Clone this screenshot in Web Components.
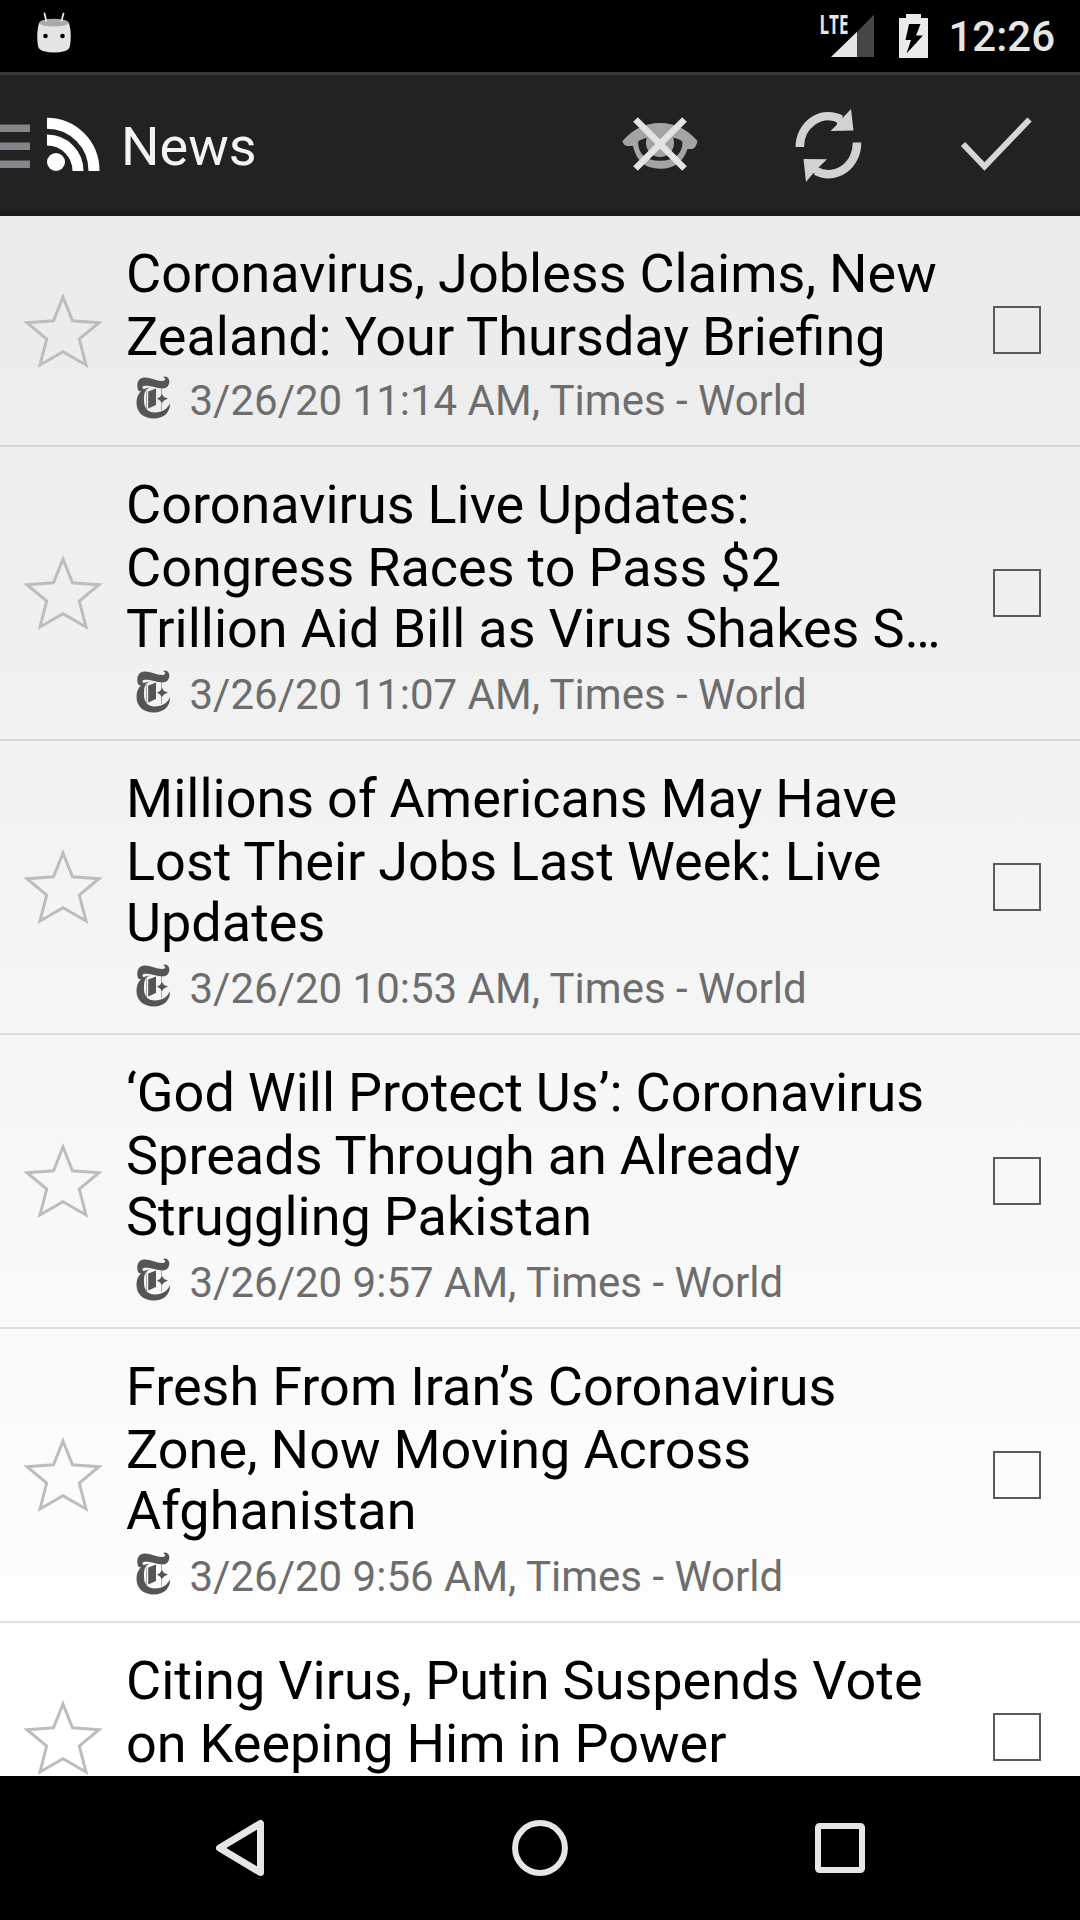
<!DOCTYPE html>
<html lang="en">
<head>
<meta charset="utf-8">
<title>News</title>
<style>
html, body { margin: 0; height: 100%; background: #000; }
body { font-family: Roboto, sans-serif; overflow: hidden; }
</style>
</head>
<body>
<news-app></news-app>
<script>
function define(name, html, setup) {
  const tpl = document.createElement('template');
  tpl.innerHTML = html;
  customElements.define(name, class extends HTMLElement {
    connectedCallback() {
      if (this.shadowRoot) return;
      const root = this.attachShadow({ mode: 'open' });
      root.append(tpl.content.cloneNode(true));
      if (setup) setup(this, root);
    }
  });
}

define('status-bar', `
<style>
:host { display: flex; height: 72px; background: #000; color: #e6e6e6; flex: none; align-items: flex-start; box-sizing: border-box; padding-right: 25px; }
svg { display: block; flex: none; }
.sp { flex: 1; }
.lte { width: 74px; height: 72px; }
.bat { width: 49px; height: 72px; }
.time { width: 116px; text-align: right; font-size: 42px; line-height: 72px; font-weight: 500; padding-top: 1px; }
text { font: 700 26px "Open Sans", Roboto, sans-serif; }
</style>
<svg width="108" height="72" viewBox="0 0 108 72">
  <path d="M39 23Q54 28 69 23Q72 34 70 46Q69 50 65 51Q54 54 43 51Q39 50 38 46Q36 33 39 23Z" fill="#e4e4e4"/>
  <ellipse cx="54" cy="22.700" rx="14.800" ry="3.900" fill="#aaa"/>
  <path d="M44.500 13.500L46.300 21M63.500 13.500L61.500 21" stroke="#e4e4e4" stroke-width="1.800" stroke-linecap="round"/>
  <circle cx="45.500" cy="36" r="2.300"/><circle cx="62.500" cy="36" r="2.300"/>
</svg>
<span class="sp"></span>
<svg class="lte" viewBox="816 0 74 72">
  <path d="M874 14.500V57H857V32Z" fill="#474747"/>
  <path d="M857 31.700V57H831Z" fill="#e6e6e6"/>
  <text x="819.500" y="33.500" textLength="29" lengthAdjust="spacingAndGlyphs" fill="#e6e6e6">LTE</text>
</svg>
<svg class="bat" viewBox="890 0 49 72">
  <path fill-rule="evenodd" d="M906 14H921V18H928V58H899V18H906ZM909 24L905.500 40H911L906.500 53.500L923 35.500H916L920.500 24Z" fill="#ebebeb"/>
</svg>
<span class="time">12:26</span>
`);

define('action-bar', `
<style>
:host { display: flex; height: 144px; flex: none; box-sizing: border-box; background: #222; border-top: 3px solid #363636; border-bottom: 6px solid #1b1b1b; color: #f3f3f3; }
svg { display: block; flex: none; height: 135px; }
.t { flex: 1; font-size: 54px; line-height: 135px; padding-top: 4px; height: 135px; box-sizing: border-box; }
</style>
<svg width="121" viewBox="0 75 121 135">
  <path d="M0 124.500H30V132H0ZM0 142.500H30V150H0ZM0 160.500H30V168H0Z" fill="#85868b"/>
  <g fill="none" stroke="#fff" stroke-width="11">
    <path d="M47 123.200A47 47.500 0 0 1 94 171"/>
    <path d="M47 140A31 31 0 0 1 78 171"/>
  </g>
  <circle cx="56" cy="162" r="9" fill="#fff"/>
</svg>
<div class="t">News</div>
<svg width="168" viewBox="576 75 168 135">
  <path fill="#a4a4a4" d="M622.500 141Q638 123 660 123Q682 123 697.500 141Q696 148 692 149H687.500Q681 168.700 660 168.700Q638 168.700 633 146H627Q623 145 622.500 141Z"/>
  <path fill="#222" d="M638 142Q642 138 649 137.500H671Q679 138 682.500 142Q682 160.700 660 160.700Q638.500 160.700 638 142Z"/>
  <circle cx="660" cy="143" r="14" fill="#a4a4a4"/>
  <path d="M635.500 119.500L684.500 168.500M684.500 119.500L635.500 168.500" stroke="#e4e4e4" stroke-width="6.600" fill="none"/>
</svg>
<svg width="168" viewBox="744 75 168 135">
  <g fill="none" stroke="#d2d2d2" stroke-width="8.500">
    <path d="M799.800 147A28.500 31 0 0 1 841 119.500"/>
    <path d="M857 142.500A28.500 31 0 0 1 816 171"/>
  </g>
  <path d="M851 109L853.500 130.500L830.500 131L837 124.500L836.500 120L843 117.500ZM803.500 159L827 159.200L818.500 167.500L821.500 172L813 173.500L806 182Z" fill="#d2d2d2"/>
</svg>
<svg width="168" viewBox="912 75 168 135">
  <path d="M963 144L984.500 166.500L1029.500 119.500" fill="none" stroke="#d6d6d6" stroke-width="6"/>
</svg>
`);

define('star-toggle', `
<style>:host { display: block; width: 84px; height: 80px; flex: none; } svg { display: block; }</style>
<svg width="84" height="80" viewBox="21 290.500 84 80">
  <path d="M63 296.500L72.500 320.200L99 322.200L79.300 338.500L86 364.500L63 351.200L40 364.500L46.700 338.500L27 322.200L53.500 320.200Z" fill="none" stroke="#bdbdbd" stroke-width="3"/>
</svg>
`);

define('check-box', `
<style>:host { display: block; width: 48px; height: 48px; box-sizing: border-box; border: 2px solid #5a5a5a; flex: none; margin-bottom: .5px; }</style>
`);

define('feed-icon', `
<style>:host { display: block; width: 36px; height: 44px; flex: none; margin-top: 1px; } svg { display: block; }</style>
<svg width="36" height="44" viewBox="0 0 36 44">
  <g fill="#555">
    <path d="M2 14C0 8 2 2 8 1.500C14 1 20 5 26 5C29 5 30 3 28.500 2C27 1.500 27 .5 29 .5C33 1 34.500 5 32.500 9C30 14 24 12.500 18 11C12 9.500 7 9 6.500 11C6.300 12 7 13 8.500 13.500C6 15.500 3.500 16 2 14Z"/>
    <path d="M14 11.500C8 13.500 8 19 8 25C8 32 12 36.500 19 36.500C26 36.500 31.500 33 34 27C34.500 36 28 42.500 18 42.500C7 42.500 .5 36 .5 27C.5 18 6 12 14 11.500Z"/>
    <path d="M12.200 15.500L20 12.500V29L12.200 32.500Z"/>
    <path d="M26 18L28 21L32 22.500L28 24.500L26 27L24 24.500L21 22.500L24 21Z"/>
    <path d="M25.200 12.500H26V34H25.200ZM10 14.500H10.800V33H10Z" opacity=".6"/>
  </g>
</svg>
`);

define('news-row', `
<style>
:host { display: flex; align-items: center; box-sizing: border-box; flex: none; border-bottom: 2px solid rgba(0,0,0,.11); padding: 0 39px 0 21px; }
.body { flex: 1; padding: 26px 0 18px 21px; }
.title { font-size: 54px; line-height: 63px; color: #000; white-space: nowrap; word-spacing: -.45px; }
.meta { display: flex; align-items: flex-start; gap: 18px; font-size: 42px; line-height: 52px; height: 52px; color: #6d6d6d; padding: 7px 0 0 9.5px; white-space: nowrap; }
::slotted(span) { display: block; }
::slotted(span:nth-child(3):not([slot])) { margin: -2px 0 2px; }
</style>
<star-toggle></star-toggle>
<div class="body">
  <div class="title"><slot></slot></div>
  <div class="meta"><feed-icon></feed-icon><slot name="meta"></slot></div>
</div>
<check-box></check-box>
`);

define('news-list', `
<style>
:host { display: flex; flex-direction: column; flex: 1; min-height: 0; overflow: hidden; background: linear-gradient(#ebebeb, #fff 97%); }
</style>
<slot></slot>
`);

define('nav-bar', `
<style>
:host { display: flex; height: 144px; flex: none; background: #000; justify-content: center; gap: 132px; align-items: center; }
svg { display: block; fill: none; stroke: #e6e6e6; stroke-width: 6; }
</style>
<svg width="168" height="144" viewBox="156 1776 168 144"><path d="M260.500 1823.500V1872.500L219.500 1848Z" stroke-linejoin="round" stroke-width="7"/></svg>
<svg width="168" height="144" viewBox="456 1776 168 144"><circle cx="540" cy="1848" r="24.900"/></svg>
<svg width="168" height="144" viewBox="756 1776 168 144"><rect x="818" y="1826" width="44" height="44" rx="1.500"/></svg>
`);

const stories = [
  [['Coronavirus, Jobless Claims, New', 'Zealand: Your Thursday Briefing'], '3/26/20 11:14 AM, Times - World'],
  [['Coronavirus Live Updates:', 'Congress Races to Pass $2', 'Trillion Aid Bill as Virus Shakes S…'], '3/26/20 11:07 AM, Times - World'],
  [['Millions of Americans May Have', 'Lost Their Jobs Last Week: Live', 'Updates'], '3/26/20 10:53 AM, Times - World'],
  [['‘God Will Protect Us’: Coronavirus', 'Spreads Through an Already', 'Struggling Pakistan'], '3/26/20 9:57 AM, Times - World'],
  [['Fresh From Iran’s Coronavirus', 'Zone, Now Moving Across', 'Afghanistan'], '3/26/20 9:56 AM, Times - World'],
  [['Citing Virus, Putin Suspends Vote', 'on Keeping Him in Power'], '']
];

define('news-app', `
<style>:host { display: flex; flex-direction: column; width: 1080px; height: 1920px; }</style>
<status-bar></status-bar>
<action-bar></action-bar>
<news-list></news-list>
<nav-bar></nav-bar>
`, (host, root) => {
  const list = root.querySelector('news-list');
  for (const [lines, meta] of stories) {
    const row = document.createElement('news-row');
    for (const line of lines) {
      const s = document.createElement('span');
      s.textContent = line;
      row.append(s);
    }
    const m = document.createElement('span');
    m.slot = 'meta';
    m.textContent = meta;
    row.append(m);
    list.append(row);
  }
});
</script>
</body>
</html>
